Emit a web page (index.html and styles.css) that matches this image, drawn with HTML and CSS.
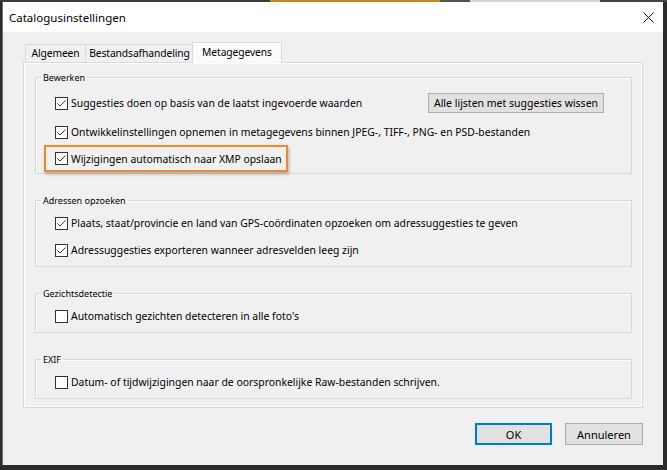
FILE: index.html
```html
<!DOCTYPE html>
<html lang="nl">
<head>
<meta charset="utf-8">
<title>Catalogusinstellingen</title>
<link rel="stylesheet" href="styles.css">
</head>
<body>
<div class="desk-strip"></div>
<div class="window">
  <div class="titlebar">
    <span class="title">Catalogusinstellingen</span>
    <svg class="close" viewBox="0 0 11 11" aria-label="Sluiten"><path d="M0.5 0.5 L10.5 10.5 M10.5 0.5 L0.5 10.5" stroke="#111" stroke-width="1" fill="none"/></svg>
  </div>
  <div class="client">
    <div class="tabs">
      <div class="tab tab-general">Algemeen</div>
      <div class="tab tab-files">Bestandsafhandeling</div>
      <div class="tab tab-meta active">Metagegevens</div>
    </div>
    <div class="panel">
      <fieldset class="group">
        <legend>Bewerken</legend>
        <div class="rows rows-edit">
          <div class="row row-btn">
            <label class="check"><svg class="box" viewBox="0 0 13 13"><rect x="0.5" y="0.5" width="12" height="12" fill="#fff" stroke="#333"/><path d="M2.5 6.5 L5 9 L10.5 3.5" fill="none" stroke="#333"/></svg>Suggesties doen op basis van de laatst ingevoerde waarden</label>
            <button class="btn btn-wide">Alle lijsten met suggesties wissen</button>
          </div>
          <div class="row row-second">
            <label class="check"><svg class="box" viewBox="0 0 13 13"><rect x="0.5" y="0.5" width="12" height="12" fill="#fff" stroke="#333"/><path d="M2.5 6.5 L5 9 L10.5 3.5" fill="none" stroke="#333"/></svg>Ontwikkelinstellingen opnemen in metagegevens binnen JPEG-, TIFF-, PNG- en PSD-bestanden</label>
          </div>
          <div class="row highlight">
            <label class="check"><svg class="box" viewBox="0 0 13 13"><rect x="0.5" y="0.5" width="12" height="12" fill="#fff" stroke="#333"/><path d="M2.5 6.5 L5 9 L10.5 3.5" fill="none" stroke="#333"/></svg>Wijzigingen automatisch naar XMP opslaan</label>
          </div>
        </div>
      </fieldset>

      <fieldset class="group">
        <legend>Adressen opzoeken</legend>
        <div class="rows">
          <label class="check"><svg class="box" viewBox="0 0 13 13"><rect x="0.5" y="0.5" width="12" height="12" fill="#fff" stroke="#333"/><path d="M2.5 6.5 L5 9 L10.5 3.5" fill="none" stroke="#333"/></svg>Plaats, staat/provincie en land van GPS-coördinaten opzoeken om adressuggesties te geven</label>
          <label class="check"><svg class="box" viewBox="0 0 13 13"><rect x="0.5" y="0.5" width="12" height="12" fill="#fff" stroke="#333"/><path d="M2.5 6.5 L5 9 L10.5 3.5" fill="none" stroke="#333"/></svg>Adressuggesties exporteren wanneer adresvelden leeg zijn</label>
        </div>
      </fieldset>

      <fieldset class="group">
        <legend>Gezichtsdetectie</legend>
        <div class="rows">
          <label class="check"><svg class="box" viewBox="0 0 13 13"><rect x="0.5" y="0.5" width="12" height="12" fill="#fff" stroke="#333"/></svg>Automatisch gezichten detecteren in alle foto's</label>
        </div>
      </fieldset>

      <fieldset class="group">
        <legend>EXIF</legend>
        <div class="rows">
          <label class="check"><svg class="box" viewBox="0 0 13 13"><rect x="0.5" y="0.5" width="12" height="12" fill="#fff" stroke="#333"/></svg>Datum- of tijdwijzigingen naar de oorspronkelijke Raw-bestanden schrijven.</label>
        </div>
      </fieldset>
    </div>
    <div class="actions">
      <button class="btn btn-ok">OK</button>
      <button class="btn">Annuleren</button>
    </div>
  </div>
</div>
</body>
</html>
```

FILE: styles.css
```css
* { box-sizing: border-box; }
html, body { margin: 0; padding: 0; }
body {
  width: 667px;
  height: 470px;
  overflow: hidden;
  background: #2b2b2b;
  font-family: "Noto Sans", "Open Sans", sans-serif;
  color: #000;
}
.desk-strip {
  height: 2px;
  background: linear-gradient(90deg, #3a3a3a 0 270px, #b88a2a 270px 440px, #555 440px 470px, #d4d4d4 470px 600px, #444 600px);
}
.window {
  width: 661px;
  height: 463px;
  margin-left: 2px;
  background: #f0f0f0;
  border-left: 1px solid #6e6e6e;
  display: flex;
  flex-direction: column;
}
.titlebar {
  flex: none;
  height: 30px;
  background: #fff;
  display: flex;
  align-items: center;
  justify-content: space-between;
  padding: 0 9px 0 6px;
}
.title { font-size: 11.5px; }
.close { width: 11px; height: 11px; display: block; }
.client {
  flex: 1;
  padding: 10px 20px 0 20px;
}
.tabs {
  height: 20px;
  display: flex;
  align-items: flex-end;
  padding-left: 2px;
  position: relative;
  z-index: 1;
}
.tab {
  height: 18px;
  border: 1px solid #d9d9d9;
  border-bottom: none;
  font-size: 10.3px;
  letter-spacing: -0.1px;
  white-space: nowrap;
  display: flex;
  align-items: center;
  justify-content: center;
  background: #f0f0f0;
  padding-bottom: 1px;
}
.tab-general { width: 61px; }
.tab-files { width: 109px; margin-left: -1px; }
.tab-meta { width: 90px; margin-left: -2px; }
.tab.active {
  height: 21px;
  margin-bottom: -1px;
  background: #fbfbfb;
  padding-bottom: 3px;
}
.panel {
  border: 1px solid #d9d9d9;
  box-shadow: inset 1px 1px 0 #fff, inset -1px -1px 0 #fff;
  background: #f0f0f0;
  padding: 8px 10px 8px 11px;
}
.group {
  margin: 20px 0 0;
  padding: 0;
  border: 1px solid #d7d7d7;
  box-shadow: inset 1px 1px 0 #fbfbfb;
  min-width: 0;
}
.group:first-child { margin-top: 0; }
.group legend {
  font-size: 9px;
  line-height: 13px;
  padding: 0 2px;
  margin-left: 5px;
}
.rows {
  display: flex;
  flex-direction: column;
  gap: 7px;
  padding: 6px 0 6px 19px;
}
.rows-edit {
  gap: 0;
  padding: 7px 27px 1px 19px;
}
.row { display: flex; align-items: center; }
.row-btn { height: 24px; justify-content: space-between; }
.row-second { margin-top: 7px; height: 20px; }
.highlight {
  margin-top: 3px;
  margin-left: -11px;
  width: 244px;
  height: 27px;
  border: 2px solid #ee8a2e;
  padding-left: 9px;
  box-shadow: 1px 2px 3px rgba(0, 0, 0, 0.28);
}
.check {
  display: flex;
  align-items: center;
  gap: 3px;
  height: 20px;
  font-size: 10.4px;
  white-space: nowrap;
}
.box { width: 13px; height: 13px; flex: none; display: block; }
.btn {
  font-family: inherit;
  font-size: 11px;
  color: #000;
  background: #e1e1e1;
  border: 1px solid #adadad;
  height: 22px;
  width: 78px;
  padding: 0;
}
.btn-wide {
  width: 176px;
  height: 20px;
  font-size: 10.5px;
}
.btn-ok {
  width: 77px;
  border: 2px solid #0078d7;
}
.actions {
  display: flex;
  justify-content: flex-end;
  gap: 13px;
  margin-top: 15px;
}
```
